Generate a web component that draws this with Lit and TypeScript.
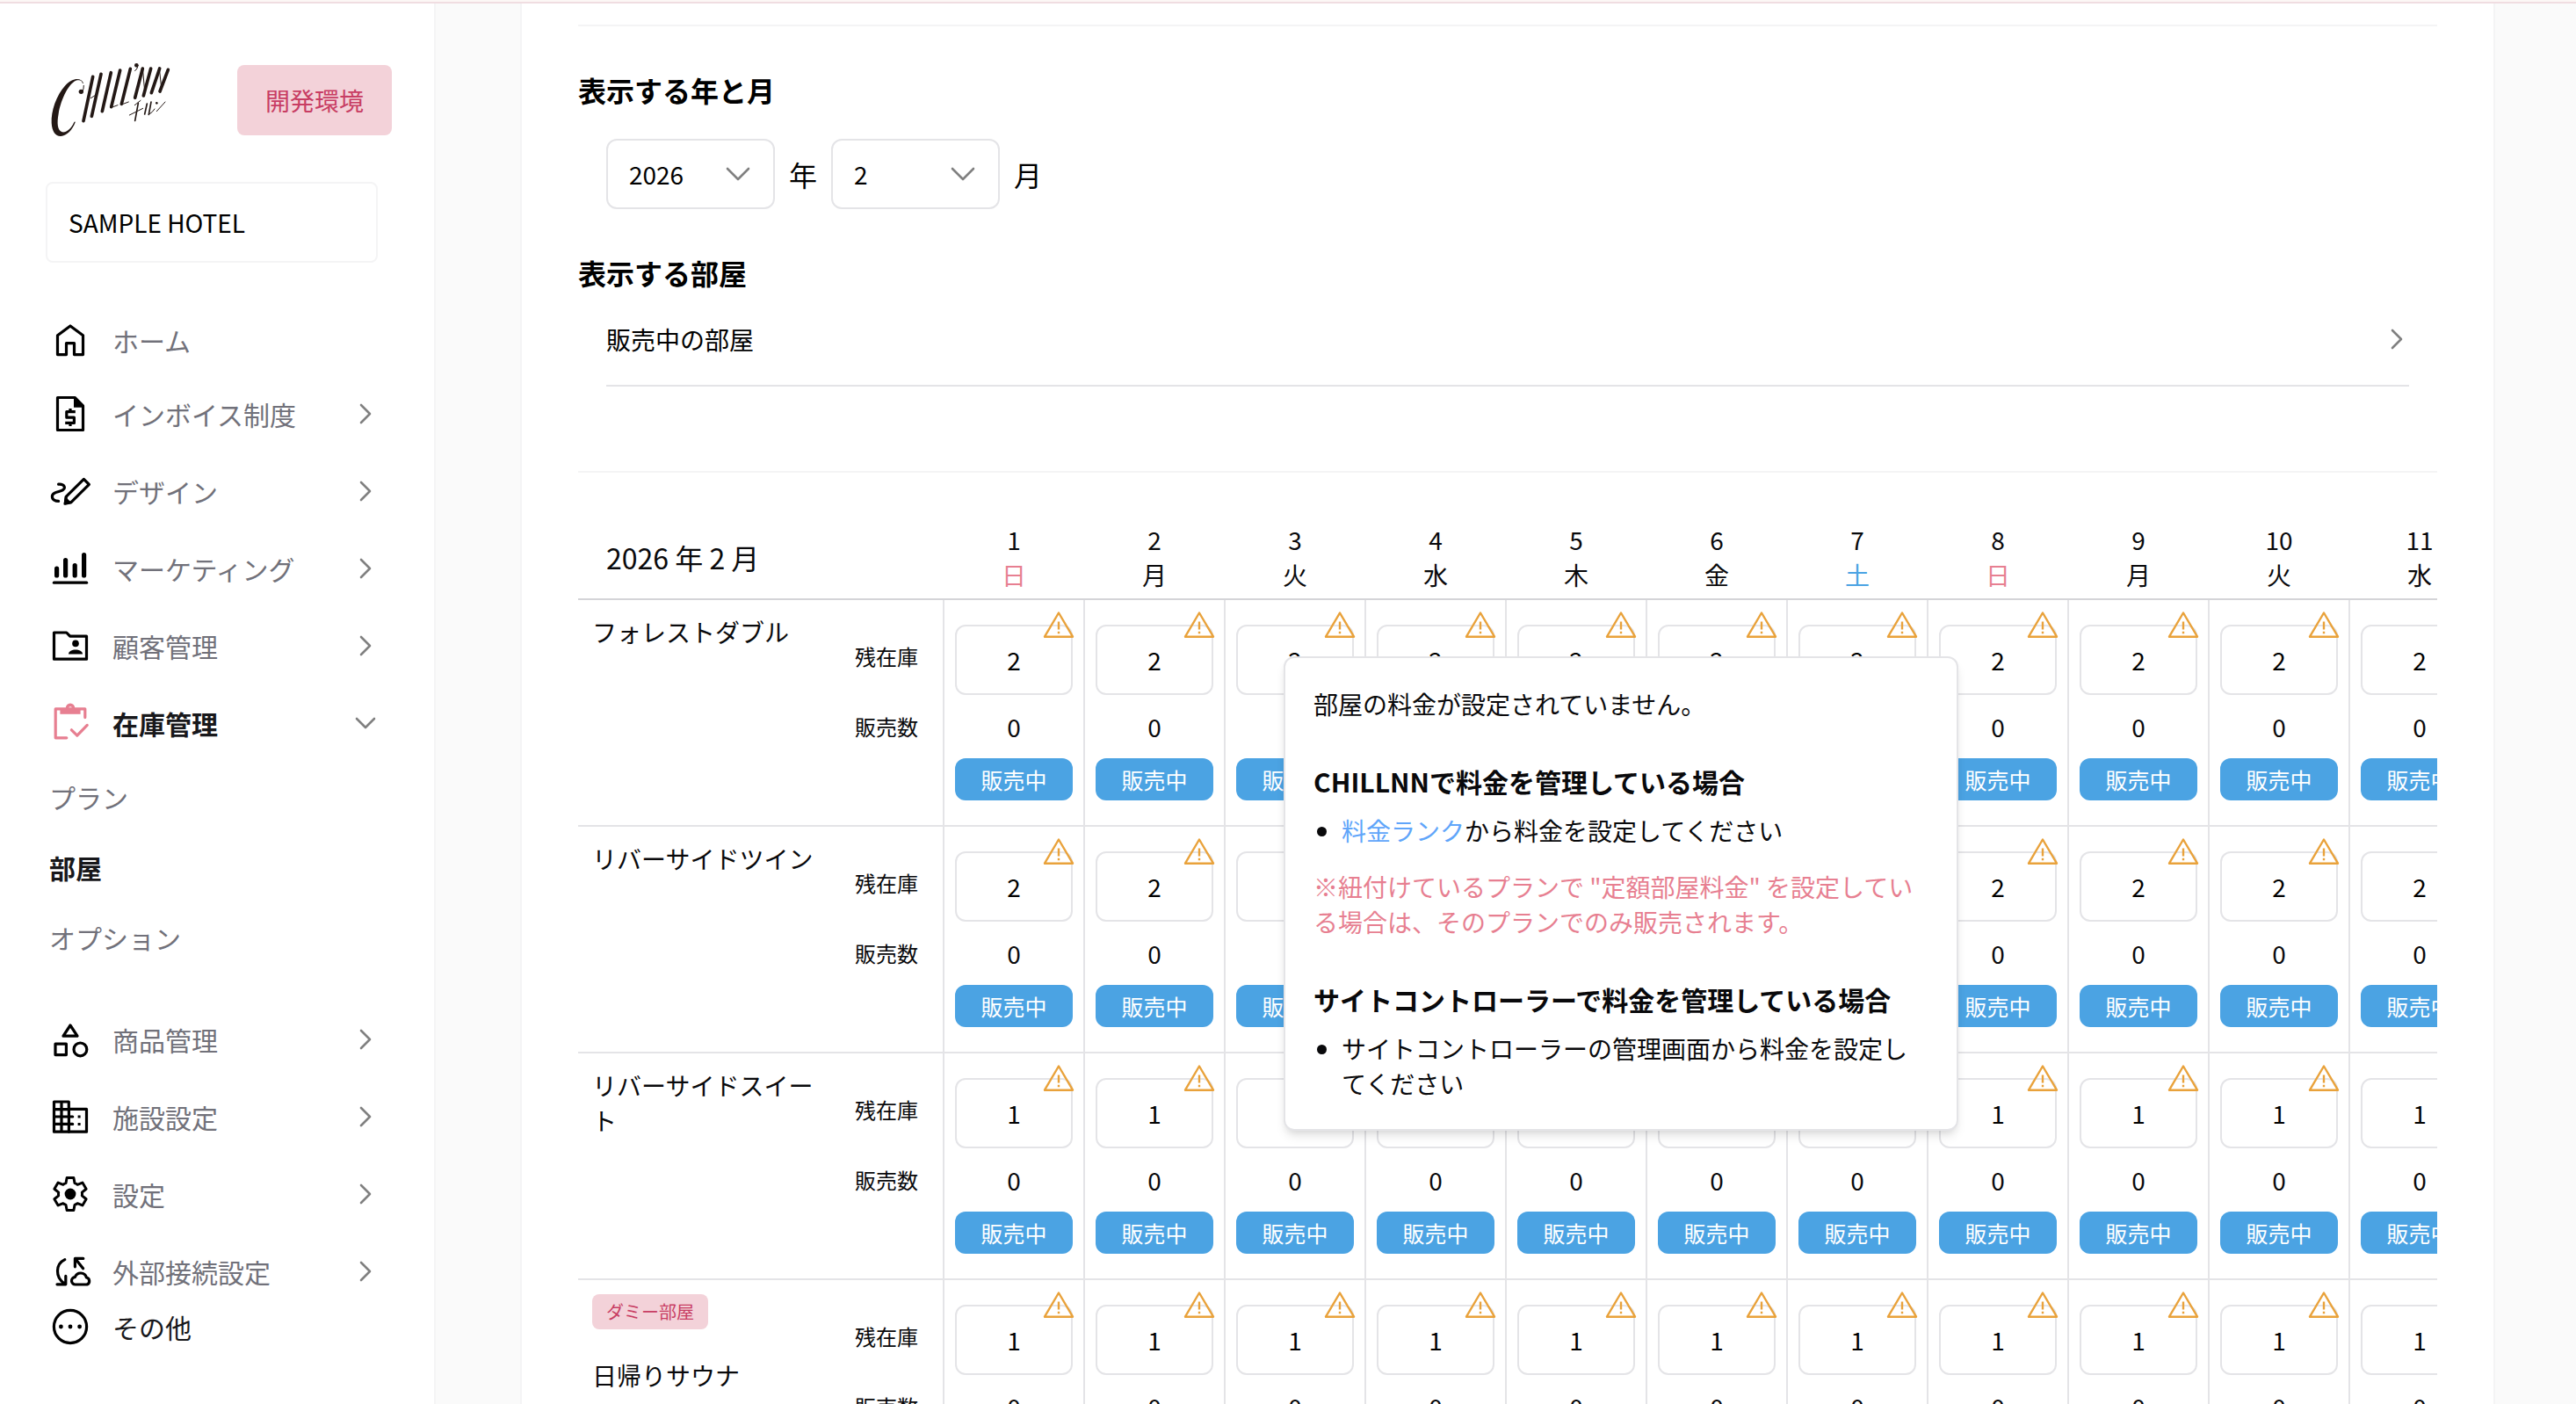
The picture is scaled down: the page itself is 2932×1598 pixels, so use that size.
import { LitElement, html, css, svg, nothing } from "lit";
import { customElement, property } from "lit/decorators.js";
import { classMap } from "lit/directives/class-map.js";

type NavItem = { icon: string; label: string };

const ICONS: Record<string, unknown> = {
  home: svg`<path class="line" d="M4.75 9.4 12 4l7.25 5.4v10.9h-5v-6.5h-4.5v6.5h-5z"/>`,
  invoice: svg`<path class="line" d="M4.75 2.75h9.8l4.7 4.7v13.8H4.75z"/><path d="M14 2.6v5.8h5.8z"/>
    <path class="line butt" d="M12 9v1.6M14.9 10.8H9.9v3.3h4.3v3.1H9.1M12 17.2V19"/>`,
  design: svg`<path class="line" d="M5.3 8.1C7.1 7.9 8.7 8.5 8.7 10c0 2.9-7 1.6-7 5 0 1.9 1.8 2.7 3.6 2.7"/>
    <path class="line" d="M9.7 15.1 19.7 5.2l3 3-10.2 10.1-3.4.8z"/><path d="M8.9 14.8 13 19l-4.7.8z"/>`,
  marketing: svg`<path class="bar" d="M4.3 12.1V16M9.3 7.3V16M14.6 10.3V16M19.8 4.3V16"/><path class="line" d="M2.7 20.1h18.6"/>`,
  customers: svg`<path class="line" d="M2.75 19.6V4.5h7.1l2 2.1h9.4v13z"/><circle cx="15" cy="10.7" r="1.9"/>
    <path d="M11 16.8c0-3.4 8-3.4 8 0z"/>`,
  inventory: svg`<path class="line" d="M9.9 20.4H3.6V3.9h16.8v4.9"/><path d="M6.2 4h11.6v2.9H6.2z"/>
    <path fill-rule="evenodd" d="M12 .8a2.6 2.6 0 0 0-2.6 2.6V5h5.2V3.4A2.6 2.6 0 0 0 12 .8zm0 1.8a1 1 0 1 1 0 2 1 1 0 0 1 0-2z"/>
    <path class="line" d="M12.7 15.9l3.2 3.2 5.7-5.9"/>`,
  products: svg`<path class="line" d="M12 4 16 10.1H8z"/><path class="line" d="M3.5 14.6h6.2v6.2H3.5z"/><circle class="line" cx="17.7" cy="17.7" r="3.7"/>`,
  facility: svg`<path class="line" d="M2.75 20.6V3.5h8.4v4.2h10.1v12.9zM7 3.5v17M11.2 7.7v13M2.75 7.8h8.4M2.75 12h10.6M2.75 16.2h10.6"/>
    <path d="M16.3 11.3h1.5v1.5h-1.5zM16.3 15.5h1.5V17h-1.5z"/>`,
  settings: svg`<path class="line" transform="translate(.9 .9) scale(.925)" d="m9.9 22-.6-3.3q-.9-.3-1.7-.9l-3.1 1.2-2.3-3.9 2.6-2.1q-.2-1 0-2L2.2 8.9l2.3-3.9 3.1 1.2q.8-.6 1.7-.9L9.9 2h4.2l.6 3.3q.9.3 1.7.9L19.5 5l2.3 3.9-2.6 2.1q.2 1 0 2l2.6 2.1-2.3 3.9-3.1-1.2q-.8.6-1.7.9l-.6 3.3z"/>
    <circle cx="12" cy="12" r="3.2"/>`,
  external: svg`<path class="line" d="M8.9 5.3C3.6 7.8 3.2 15.3 8.7 19M4.5 19.4h4.9v-4.7M19.4 4.7h-4.7v4.7M15 5l4.3 5.4"/>
    <path class="line" d="M15 19.5a2.1 2.1 0 0 1-.3-4.2 3.4 3.4 0 0 1 6.5.2 2.1 2.1 0 0 1 .3 4z"/>`,
  more: svg`<circle class="line" cx="12" cy="12" r="9.3"/><circle cx="6.7" cy="12" r="1.2"/><circle cx="12" cy="12" r="1.2"/><circle cx="17.3" cy="12" r="1.2"/>`,
};

const NAV_TOP: NavItem[] = [
  { icon: "invoice", label: "インボイス制度" },
  { icon: "design", label: "デザイン" },
  { icon: "marketing", label: "マーケティング" },
  { icon: "customers", label: "顧客管理" },
];
const NAV_BOTTOM: NavItem[] = [
  { icon: "products", label: "商品管理" },
  { icon: "facility", label: "施設設定" },
  { icon: "settings", label: "設定" },
  { icon: "external", label: "外部接続設定" },
];

const chevronRight = html`<svg class="chevron" viewBox="0 0 24 24" aria-hidden="true"><path d="M7 2 17 12 7 22" /></svg>`;
const chevronDown = html`<svg class="chevron" viewBox="0 0 24 24" aria-hidden="true"><path d="M2 7 12 17 22 7" /></svg>`;

const chevronStyles = css`
  .chevron {
    width: 24px;
    height: 24px;
    flex: none;
    fill: none;
    stroke: #808080;
    stroke-width: 2.6;
    stroke-linecap: round;
    stroke-linejoin: round;
  }
`;

const resetStyles = css`
  *,
  *::before,
  *::after {
    box-sizing: border-box;
  }
  h2,
  h3,
  p,
  ul {
    margin: 0;
    padding: 0;
  }
  button,
  input,
  select {
    font: inherit;
    color: inherit;
    margin: 0;
    padding: 0;
    border: 0;
    background: none;
  }
  a {
    color: inherit;
    text-decoration: none;
  }
`;

@customElement("side-nav")
export class SideNav extends LitElement {
  static styles = [
    resetStyles,
    chevronStyles,
    css`
      :host {
        display: block;
        flex: none;
        width: 496px;
        padding: 70px 48px 0 52px;
        background: #fff;
        border-right: 2px solid #f4f4f5;
      }
      .brand {
        display: flex;
        align-items: center;
        justify-content: space-between;
        height: 80px;
        padding-left: 4px;
      }
      .logo {
        width: 140px;
        height: 84px;
        fill: #231815;
      }
      .logo .stroke,
      .logo .mid,
      .logo .thin {
        stroke: #231815;
        stroke-width: 11;
        fill: none;
        stroke-linecap: round;
      }
      .logo .mid {
        stroke-width: 5;
      }
      .logo .thin {
        stroke-width: 3;
      }
      .env {
        display: flex;
        align-items: center;
        height: 80px;
        padding: 0 32px;
        border-radius: 8px;
        background: #f3d2d9;
        color: #c83d63;
        font-size: 28px;
      }
      .hotel {
        display: flex;
        align-items: center;
        width: 378px;
        height: 92px;
        margin: 53px 0 48px;
        padding: 0 24px;
        border: 2px solid #f4f4f5;
        border-radius: 8px;
        font-size: 28px;
        text-align: left;
      }
      nav {
        display: flex;
        flex-direction: column;
        width: 376px;
        padding-left: 4px;
        font-size: 30px;
        line-height: 40px;
        color: #71717a;
      }
      .item {
        display: flex;
        align-items: center;
        gap: 24px;
        height: 88px;
        text-align: left;
        white-space: nowrap;
      }
      .item.short {
        height: 80px;
      }
      .item.last {
        height: 38px;
        color: #18181b;
      }
      .item.active,
      .sub .current {
        color: #18181b;
        font-weight: 700;
      }
      .item.active .icon {
        color: #e77f91;
      }
      .label {
        flex: 1;
      }
      .icon {
        width: 48px;
        height: 48px;
        flex: none;
        color: #000;
        fill: currentColor;
      }
      .icon .line {
        fill: none;
        stroke: currentColor;
        stroke-width: 1.6;
        stroke-linejoin: round;
        stroke-linecap: round;
      }
      .icon .butt {
        stroke-linecap: butt;
      }
      .icon .bar {
        fill: none;
        stroke: currentColor;
        stroke-width: 2.6;
        stroke-linecap: round;
      }
      .sub {
        display: flex;
        flex-direction: column;
        margin-bottom: 32px;
      }
      .sub a {
        display: flex;
        align-items: center;
        height: 80px;
      }
    `,
  ];

  private icon(name: string) {
    return html`<svg class="icon" viewBox="0 0 24 24" aria-hidden="true">${ICONS[name]}</svg>`;
  }

  private group(item: NavItem, open = false) {
    return html`<button class=${classMap({ item: true, active: open })} type="button" aria-expanded=${open}>
      ${this.icon(item.icon)}<span class="label">${item.label}</span>${open ? chevronDown : chevronRight}
    </button>`;
  }

  render() {
    return html`
      <div class="brand">
        <svg class="logo" viewBox="48 36 420 252" role="img" aria-label="CHILLNN">
          <path
            d="M165 104C158 84 128 84 103 112 72 146 54 200 56 240c2 30 14 46 32 45 20-1 39-21 49-47 1-3-3-4-4-1-11 25-29 37-41 34-16-5-18-31-12-63 8-48 36-108 64-114 12-2 16 3 18 11z"
          />
          <circle cx="157" cy="133" r="8" />
          <path class="thin" d="M162 132q4-7 4-20" />
          <path class="stroke" d="M197 82 165 233M225 73 193 217M259 68 229 200M290 60 260 185M325 55 295 175" />
          <path class="thin" d="M190 155l16-10M260 187l22-8M295 177l24-9" />
          <circle cx="346" cy="43" r="7" />
          <path class="thin" d="M351 43q0 12-10 19" />
          <path class="stroke" d="M367 54 341 154M395 54 370 147M425 54 397 137M454 58 426 132" />
          <path class="thin" d="M368 62l6 70M425 62l6 58" />
          <path class="mid" d="M352 172 341 232M382 174l-8 36M396 168l-8 43" />
          <path class="thin" d="M360 163l-20 16M322 213l46-23M388 211q12-6 20-19M444 168l-29 32" />
          <circle cx="415" cy="172" r="4" />
        </svg>
        <span class="env">開発環境</span>
      </div>
      <button class="hotel" type="button">SAMPLE HOTEL</button>
      <nav>
        <a class="item short" href="#home">${this.icon("home")}<span class="label">ホーム</span></a>
        ${NAV_TOP.map((i) => this.group(i))}
        ${this.group({ icon: "inventory", label: "在庫管理" }, true)}
        <div class="sub">
          <a href="#plans">プラン</a>
          <a href="#rooms" class="current" aria-current="page">部屋</a>
          <a href="#options">オプション</a>
        </div>
        ${NAV_BOTTOM.map((i) => this.group(i))}
        <a class="item last" href="#other">${this.icon("more")}<span class="label">その他</span></a>
      </nav>
    `;
  }
}

type Room = { name: string; stock: number; dummy?: boolean };

const ROOMS: Room[] = [
  { name: "フォレストダブル", stock: 2 },
  { name: "リバーサイドツイン", stock: 2 },
  { name: "リバーサイドスイート", stock: 1 },
  { name: "日帰りサウナ", stock: 1, dummy: true },
];
const WEEKDAYS = ["日", "月", "火", "水", "木", "金", "土"];

@customElement("stock-calendar")
export class StockCalendar extends LitElement {
  @property({ type: Number }) year = 2026;
  @property({ type: Number }) month = 2;
  /** Day of the first room whose price notice is open. */
  @property({ type: Number }) noticeDay = 5;

  static styles = [
    resetStyles,
    css`
      :host {
        display: block;
        overflow-x: auto;
        overflow-y: hidden;
        scrollbar-width: none;
        padding-top: 56px;
      }
      table {
        table-layout: fixed;
        width: max-content;
        border-collapse: separate;
        border-spacing: 0;
        font-size: 28px;
        line-height: 40px;
        color: #09090b;
      }
      th {
        font-weight: 400;
      }
      th,
      td {
        padding: 0;
      }
      .name-col {
        width: 415px;
      }
      .day-col {
        width: 160px;
      }
      thead th {
        border-bottom: 2px solid #d4d4d8;
        padding: 0 0 7px 2px;
        text-align: center;
      }
      thead .month {
        padding-left: 32px;
        text-align: left;
        font-size: 32px;
      }
      .weekday {
        display: block;
      }
      .weekday.sun {
        color: #e77f91;
      }
      .weekday.sat {
        color: #4ba3e3;
      }
      tbody th,
      tbody td {
        border-bottom: 2px solid #e4e4e7;
        vertical-align: top;
      }
      tbody td {
        border-left: 2px solid #e4e4e7;
      }
      .room {
        display: flex;
        justify-content: space-between;
        padding: 16px 28px 0 16px;
        text-align: left;
      }
      .room-name {
        width: 270px;
      }
      .tag {
        display: block;
        width: max-content;
        margin-bottom: 32px;
        padding: 0 16px;
        border-radius: 8px;
        background: #f3d2d9;
        color: #c83d63;
        font-size: 20px;
      }
      .captions {
        display: flex;
        flex-direction: column;
        gap: 40px;
        padding-top: 28px;
        font-size: 24px;
      }
      .day {
        display: flex;
        flex-direction: column;
        gap: 16px;
        padding: 28px 12px;
        text-align: center;
      }
      .stock {
        position: relative;
        display: flex;
      }
      .stock input {
        width: 100%;
        height: 80px;
        border: 2px solid #e4e4e7;
        border-radius: 12px;
        background: #fff;
        color: #000;
        text-align: center;
      }
      .notice {
        position: absolute;
        top: -16px;
        right: -2px;
        width: 36px;
      }
      .warn {
        display: block;
        width: 36px;
        height: 32px;
      }
      .warn svg {
        display: block;
        width: 36px;
        height: 32px;
        fill: none;
        stroke: #e9a23b;
        stroke-width: 2.4;
        stroke-linejoin: round;
      }
      .status {
        height: 48px;
        border-radius: 12px;
        background: #4ba3e3;
        color: #fff;
        font-size: 25px;
        line-height: 48px;
      }
      .tooltip {
        position: absolute;
        z-index: 10;
        top: 52px;
        left: 50%;
        width: 768px;
        transform: translateX(-50%);
        padding: 32px;
        border: 2px solid #e4e4e7;
        border-radius: 12px;
        background: #fff;
        box-shadow: 0 8px 12px -2px rgb(0 0 0 / 0.1), 0 4px 8px -4px rgb(0 0 0 / 0.1);
        text-align: left;
      }
      .tooltip h3 {
        margin: 48px 0 16px;
        font-size: 30px;
        line-height: 40px;
      }
      .tooltip ul {
        padding-left: 32px;
      }
      .tooltip a {
        color: #60a5fa;
      }
      .tooltip .caution {
        margin-top: 24px;
        color: #e77f91;
      }
    `,
  ];

  private tooltip() {
    return html`<div class="tooltip" role="tooltip" id="price-notice">
      <p>部屋の料金が設定されていません。</p>
      <h3>CHILLNNで料金を管理している場合</h3>
      <ul>
        <li><a href="#price-rank">料金ランク</a>から料金を設定してください</li>
      </ul>
      <p class="caution">※紐付けているプランで "定額部屋料金" を設定している場合は、そのプランでのみ販売されます。</p>
      <h3>サイトコントローラーで料金を管理している場合</h3>
      <ul>
        <li>サイトコントローラーの管理画面から料金を設定してください</li>
      </ul>
    </div>`;
  }

  private dayCell(room: Room, day: number, open: boolean) {
    return html`<td>
      <div class="day">
        <div class="stock">
          <input type="text" inputmode="numeric" .value=${String(room.stock)} aria-label="${room.name} ${day}日 残在庫" />
          <div class="notice">
            <button class="warn" type="button" aria-label="料金の注意">
              <svg viewBox="0 0 36 32" aria-hidden="true">
                <path d="M18 2.5 34 29.7H2z" /><path d="M18 12.5v9M18 23.8v2.5" />
              </svg>
            </button>
            ${open ? this.tooltip() : nothing}
          </div>
        </div>
        <div>0</div>
        <button class="status" type="button">販売中</button>
      </div>
    </td>`;
  }

  render() {
    const count = new Date(this.year, this.month, 0).getDate();
    const first = new Date(this.year, this.month - 1, 1).getDay();
    const days = Array.from({ length: count }, (_, i) => i + 1);
    return html`<table>
      <colgroup>
        <col class="name-col" />
        ${days.map(() => html`<col class="day-col" />`)}
      </colgroup>
      <thead>
        <tr>
          <th class="month" scope="col">${this.year} 年 ${this.month} 月</th>
          ${days.map((d) => {
            const w = (first + d - 1) % 7;
            return html`<th scope="col">
              ${d}<span class=${classMap({ weekday: true, sun: w === 0, sat: w === 6 })}>${WEEKDAYS[w]}</span>
            </th>`;
          })}
        </tr>
      </thead>
      <tbody>
        ${ROOMS.map(
          (room, r) => html`<tr>
            <th scope="row">
              <div class="room">
                <div class="room-name">${room.dummy ? html`<span class="tag">ダミー部屋</span>` : nothing}${room.name}</div>
                <div class="captions"><span>残在庫</span><span>販売数</span></div>
              </div>
            </th>
            ${days.map((d) => this.dayCell(room, d, r === 0 && d === this.noticeDay))}
          </tr>`
        )}
      </tbody>
    </table>`;
  }
}

@customElement("app-root")
export class AppRoot extends LitElement {
  static styles = [
    resetStyles,
    chevronStyles,
    css`
      :host {
        display: flex;
        flex-direction: column;
        height: 100vh;
        overflow: hidden;
        background: #fafafa;
        color: #000;
        font-family: "Noto Sans CJK JP", "Noto Sans", sans-serif;
        font-size: 28px;
        line-height: 40px;
      }
      .strip {
        flex: none;
        height: 4px;
        background: #fcf7f5;
        border-bottom: 2px solid #f0dde1;
      }
      .layout {
        display: flex;
        flex: 1;
        min-height: 0;
      }
      main {
        flex: 1;
        min-width: 0;
        display: flex;
        padding: 0 92px 0 96px;
      }
      .card {
        flex: 1;
        min-width: 0;
        padding: 24px 64px 0;
        background: #fff;
        border: solid #f4f4f5;
        border-width: 0 2px;
      }
      .filters {
        border: solid #f4f4f5;
        border-width: 2px 0;
        padding: 48px 0 96px;
      }
      h2 {
        font-size: 32px;
        line-height: 48px;
        font-weight: 700;
      }
      .period {
        display: flex;
        align-items: center;
        gap: 16px;
        margin: 32px 0 48px;
        padding-left: 32px;
      }
      .period label {
        font-size: 32px;
      }
      .picker {
        position: relative;
        display: flex;
      }
      .picker select {
        appearance: none;
        width: 192px;
        height: 80px;
        padding: 0 64px 0 24px;
        border: 2px solid #e4e4e7;
        border-radius: 12px;
        background: #fff;
      }
      .picker .chevron {
        position: absolute;
        top: 28px;
        right: 30px;
        pointer-events: none;
        overflow: visible;
      }
      .rooms {
        display: flex;
        align-items: center;
        justify-content: space-between;
        width: calc(100% - 64px);
        margin-left: 32px;
        padding: 32px 2px 32px 0;
        border-bottom: 2px solid #e4e4e7;
        text-align: left;
      }
    `,
  ];

  private picker(id: string, value: number, options: number[], unit: string) {
    return html`<div class="picker">
        <select id=${id}>
          ${options.map((o) => html`<option value=${o} ?selected=${o === value}>${o}</option>`)}
        </select>
        <svg class="chevron" viewBox="0 0 24 24" aria-hidden="true"><path d="M0 6 12 18 24 6" /></svg>
      </div>
      <label for=${id}>${unit}</label>`;
  }

  render() {
    return html`
      <div class="strip"></div>
      <div class="layout">
        <side-nav></side-nav>
        <main>
          <div class="card">
            <section class="filters">
              <h2>表示する年と月</h2>
              <div class="period">
                ${this.picker("year", 2026, [2025, 2026, 2027], "年")}
                ${this.picker("month", 2, [1, 2, 3, 4, 5, 6, 7, 8, 9, 10, 11, 12], "月")}
              </div>
              <h2>表示する部屋</h2>
              <button class="rooms" type="button"><span>販売中の部屋</span>${chevronRight}</button>
            </section>
            <stock-calendar></stock-calendar>
          </div>
        </main>
      </div>
    `;
  }
}
